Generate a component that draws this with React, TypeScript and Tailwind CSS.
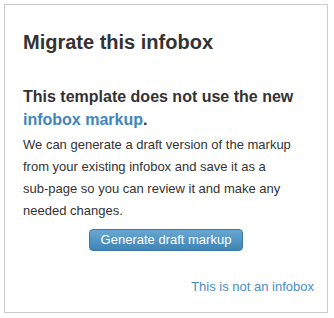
export default function App() {
  return (
    <div className="min-h-screen bg-white p-1 font-['Liberation_Sans',Arial,sans-serif] text-[#333]">
      <div className="h-[309px] w-[324px] border border-[#cccccc] bg-white px-[18px] pb-4 pt-[25px]">
        {/* Title */}
        <h2 className="text-[20px] font-bold leading-6">Migrate this infobox</h2>

        {/* Notice */}
        <h3 className="mt-[31px] text-[16px] font-bold leading-[23px]">
          This template does not use the new{' '}
          <a href="#" className="text-[#3e86bd]">infobox markup</a>.
        </h3>
        <p className="mt-[3px] text-[13px] leading-[22px]">
          We can generate a draft version of the markup from your existing infobox and save it as a{' '}
          <span className="whitespace-nowrap">sub-page</span> so you can review it and make any needed
          changes.
        </p>

        {/* Action */}
        <div className="mt-[7px] flex justify-center">
          <button className="h-[22px] rounded-[4px] border border-[#3a78a6] bg-gradient-to-b from-[#68a7d2] to-[#3f84b6] px-[11px] text-[13px] leading-5 text-white">
            Generate draft markup
          </button>
        </div>

        <div className="-mr-[5px] mt-[25px] flex justify-end">
          <a href="#" className="text-[13px] leading-[22px] text-[#4b8cc8]">
            This is not an infobox
          </a>
        </div>
      </div>
    </div>
  );
}
